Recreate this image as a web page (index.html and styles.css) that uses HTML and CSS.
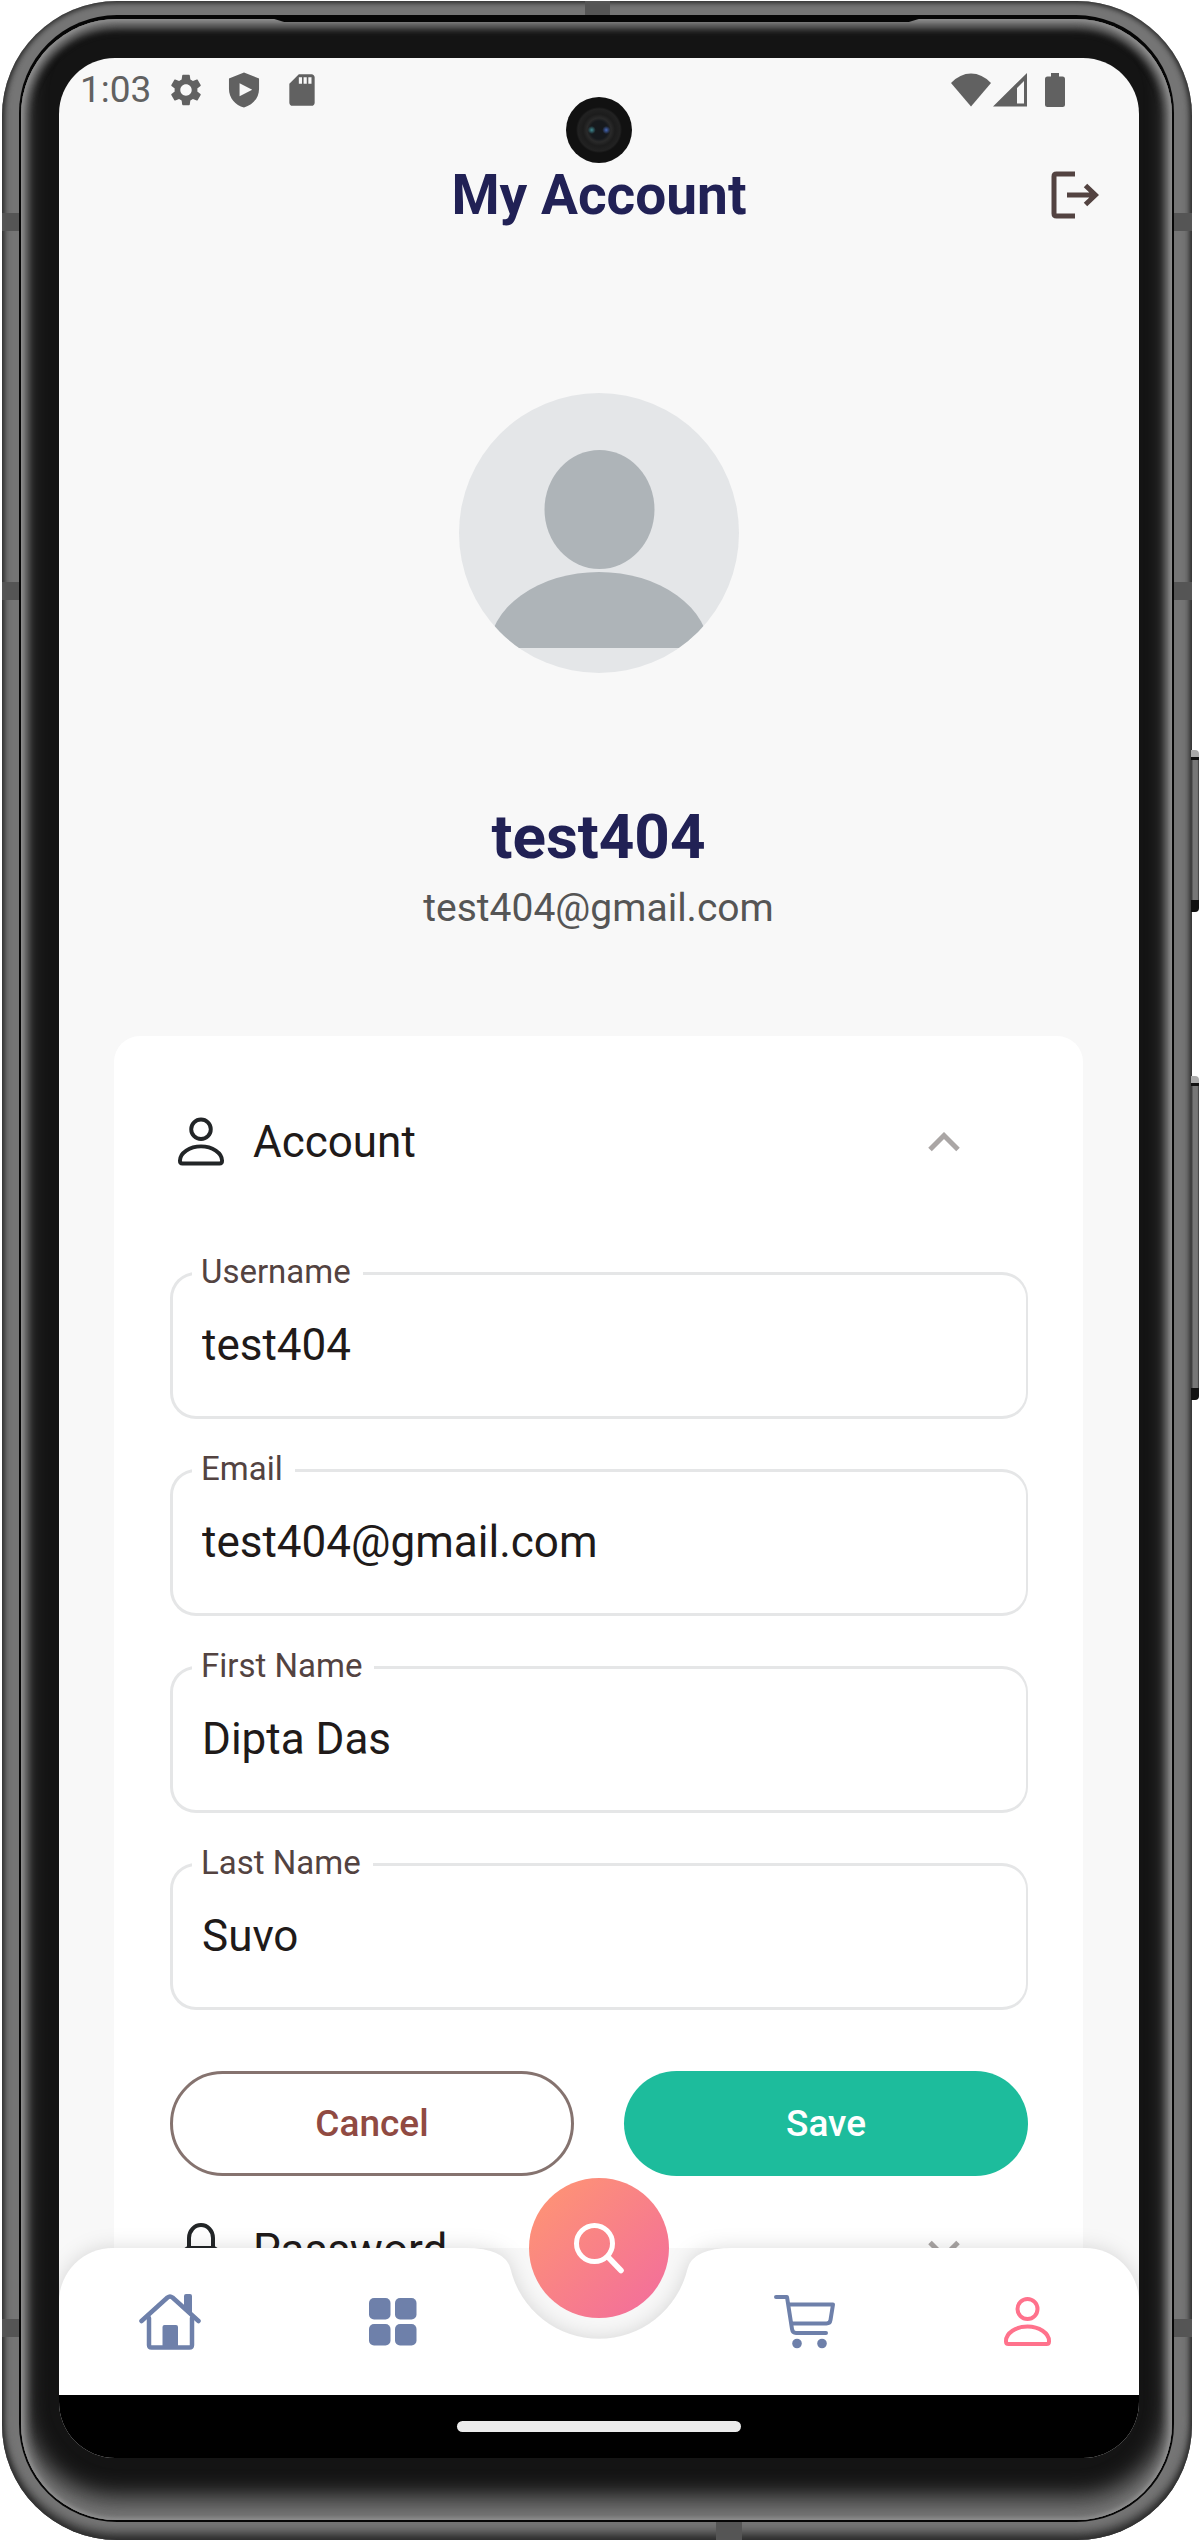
FILE: index.html
```html
<!DOCTYPE html>
<html lang="en">
<head>
<meta charset="utf-8">
<meta name="viewport" content="width=device-width, initial-scale=1">
<title>My Account</title>
<link rel="stylesheet" href="styles.css">
</head>
<body>
<svg class="sprite" aria-hidden="true">
  <symbol id="icon-person" viewBox="0 0 47 49">
    <g fill="none" stroke="currentColor" stroke-width="4" stroke-linejoin="round">
      <circle cx="23.500" cy="12" r="10"/>
      <path d="M2 44C2 36 12 29.500 23.500 29.500S45 36 45 44v.5q0 2.500-2.500 2.500h-38Q2 47 2 44.500z"/>
    </g>
  </symbol>
  <symbol id="icon-chevron" viewBox="0 0 32 20">
    <path d="M2 17.500 16 3.500l14 14" fill="none" stroke="currentColor" stroke-width="5"/>
  </symbol>
</svg>

<div class="phone">
  <span class="band band-side band-upper"></span>
  <span class="band band-side band-middle"></span>
  <span class="band band-side band-lower"></span>
  <span class="band band-top"></span>
  <span class="band band-bottom"></span>
  <span class="key key-power"></span>
  <span class="key key-volume"></span>

  <div class="rim">
    <div class="glass">
      <span class="speaker"></span>
      <div class="screen">
        <span class="camera"></span>

        <div class="status">
          <span class="time">1:03</span>
          <div class="status-icons">
            <svg width="38" height="38" viewBox="0 0 24 24"><path fill="currentColor" d="M19.140 12.940c.04-.3.06-.61.06-.94 0-.32-.02-.64-.07-.94l2.030-1.580c.18-.14.23-.41.12-.61l-1.920-3.320c-.12-.22-.37-.29-.59-.22l-2.390.96c-.5-.38-1.030-.7-1.620-.94l-.36-2.540c-.04-.24-.24-.41-.48-.41h-3.840c-.24 0-.43.17-.47.41l-.36 2.540c-.59.24-1.130.57-1.620.94l-2.390-.96c-.22-.08-.47 0-.59.22L2.740 8.870c-.12.21-.08.47.12.61l2.030 1.580c-.05.3-.09.63-.09.94s.02.64.07.94l-2.030 1.580c-.18.14-.23.41-.12.61l1.920 3.320c.12.22.37.29.59.22l2.390-.96c.5.38 1.030.7 1.620.94l.36 2.540c.05.24.24.41.48.41h3.840c.24 0 .44-.17.47-.41l.36-2.540c.59-.24 1.130-.56 1.620-.94l2.390.96c.22.08.47 0 .59-.22l1.920-3.320c.12-.22.07-.47-.12-.61l-2.010-1.580zM12 15.600c-1.980 0-3.600-1.620-3.600-3.600s1.620-3.600 3.600-3.600 3.600 1.620 3.600 3.600-1.620 3.600-3.600 3.600z"/></svg>
            <svg width="38" height="38" viewBox="0 0 24 24"><path fill="currentColor" fill-rule="evenodd" d="M12 1 2.500 4.700v6.600c0 5.700 4 10.200 9.500 11.700 5.500-1.500 9.500-6 9.500-11.700V4.700zM9.200 7.700l8 4.100-8 4.100z"/></svg>
            <svg width="38" height="38" viewBox="0 0 24 24"><path fill="currentColor" d="M18 2h-8L4 8v12c0 1.100.9 2 2 2h12c1.100 0 2-.9 2-2V4c0-1.100-.9-2-2-2zm-6 6h-2V4h2v4zm3 0h-2V4h2v4zm3 0h-2V4h2v4z"/></svg>
          </div>
          <div class="status-signal">
            <svg width="40" height="34" viewBox="0 0 40 34"><path fill="currentColor" d="M20 33.500 0 10Q9 .5 20 .5T40 10z"/></svg>
            <svg width="34" height="34" viewBox="0 0 34 34"><path fill="currentColor" fill-rule="evenodd" d="M34 0v33.500H0zM31 8l-7 7v15.500h7z"/></svg>
            <svg class="battery" width="20" height="34" viewBox="0 0 20 34"><path fill="currentColor" d="M6 0h8v3.500h3.500Q20 3.500 20 6v25.500q0 2.500-2.500 2.500h-15Q0 34 0 31.500V6q0-2.500 2.500-2.500H6z"/></svg>
          </div>
        </div>

        <header class="appbar">
          <h1 class="title">My Account</h1>
          <button class="logout" type="button" aria-label="Log out">
            <svg width="48" height="48" viewBox="0 0 48 48" fill="none" stroke="currentColor" stroke-width="5"><path d="M24 3H5.500Q3 3 3 5.500v37Q3 45 5.500 45H24"/><path d="M16 24h29M34.500 14.500 44.500 24l-10 9.500"/></svg>
          </button>
        </header>

        <main class="content">
          <section class="profile">
            <svg class="avatar" width="280" height="280" viewBox="0 0 280 280" role="img" aria-label="Profile picture">
              <clipPath id="avatar-clip"><circle cx="140" cy="140" r="140"/></clipPath>
              <clipPath id="body-clip"><rect width="280" height="255"/></clipPath>
              <g clip-path="url(#avatar-clip)">
                <rect width="280" height="280" fill="#e4e6e8"/>
                <ellipse cx="140.500" cy="116.500" rx="55" ry="59.500" fill="#aeb4b8"/>
                <path d="M29.500 259a110.500 80 0 0 1 221 0z" clip-path="url(#body-clip)" fill="#aeb4b8"/>
              </g>
            </svg>
            <h2 class="name">test404</h2>
            <p class="mail">test404@gmail.com</p>
          </section>

          <section class="card">
            <button class="row" type="button" aria-expanded="true">
              <svg class="row-icon" width="46" height="49"><use href="#icon-person"/></svg>
              <span class="row-label">Account</span>
              <svg class="chevron" width="32" height="20"><use href="#icon-chevron"/></svg>
            </button>

            <form class="form">
              <div class="field">
                <label for="username">Username</label>
                <input id="username" type="text" value="test404">
              </div>
              <div class="field">
                <label for="email">Email</label>
                <input id="email" type="email" value="test404@gmail.com">
              </div>
              <div class="field">
                <label for="first-name">First Name</label>
                <input id="first-name" type="text" value="Dipta Das">
              </div>
              <div class="field">
                <label for="last-name">Last Name</label>
                <input id="last-name" type="text" value="Suvo">
              </div>
              <div class="actions">
                <button class="btn btn-cancel" type="button">Cancel</button>
                <button class="btn btn-save" type="submit">Save</button>
              </div>
            </form>

            <button class="row" type="button" aria-expanded="false">
              <svg class="row-icon" width="46" height="54" viewBox="0 0 46 54" fill="none" stroke="currentColor" stroke-width="4"><path d="M11 25V15a12 13 0 0 1 24 0v10"/><rect x="7" y="25" width="32" height="27" rx="4"/></svg>
              <span class="row-label">Password</span>
              <svg class="chevron chevron-down" width="32" height="20"><use href="#icon-chevron"/></svg>
            </button>
          </section>
        </main>

        <nav class="tabbar" aria-label="Main">
          <div class="tabbar-shape">
            <span class="tabbar-end tabbar-start"></span>
            <svg width="268" height="147" viewBox="0 0 268 147"><path fill="#fff" d="M0 0Q40.500 0 45.500 21A91 91 0 0 0 222.500 21Q227.500 0 268 0V147H0z"/></svg>
            <span class="tabbar-end"></span>
          </div>
          <a class="tab" href="#home" aria-label="Home">
            <svg width="62" height="56" viewBox="0 0 62 56"><g fill="none" stroke="currentColor" stroke-width="4.500" stroke-linecap="round" stroke-linejoin="round"><path d="M2.500 27 28.500 3.500Q31 1.500 33.500 3.500L59.500 27"/><path d="M10 24v27q0 2.500 2.500 2.500h38q2.500 0 2.500-2.500V24"/></g><path fill="currentColor" d="M45 14V2q0-2 2-2h4q2 0 2 2v19zM23.500 33q0-2 2-2h11.500q2 0 2 2v20H23.500z"/></svg>
          </a>
          <a class="tab" href="#categories" aria-label="Categories">
            <svg width="48" height="48" viewBox="0 0 48 48" fill="currentColor"><rect width="21.500" height="21.500" rx="5"/><rect x="26" width="21.500" height="21.500" rx="5"/><rect y="26" width="21.500" height="21.500" rx="5"/><rect x="26" y="26" width="21.500" height="21.500" rx="5"/></svg>
          </a>
          <a class="tab tab-cart" href="#cart" aria-label="Cart">
            <svg width="62" height="54" viewBox="0 0 62 54"><g fill="none" stroke="currentColor" stroke-width="4" stroke-linecap="round" stroke-linejoin="round"><path d="M2 2h11l5 32q.6 4 4 4h30"/><path d="M15 9.500h44L56.500 25q-.5 3.500-4 3.500H18"/></g><circle cx="23" cy="48.500" r="4.800" fill="currentColor"/><circle cx="48" cy="48.500" r="4.800" fill="currentColor"/></svg>
          </a>
          <a class="tab tab-active" href="#account" aria-label="Account" aria-current="page">
            <svg width="47" height="49"><use href="#icon-person"/></svg>
          </a>
          <button class="search" type="button" aria-label="Search">
            <svg width="52" height="52" viewBox="0 0 52 52" fill="none" stroke="currentColor" stroke-linecap="round"><circle cx="21.500" cy="21.500" r="18" stroke-width="5"/><path stroke-width="5.500" d="m35.500 35.500 12.500 13"/></svg>
          </button>
        </nav>

        <div class="gesture"><span class="handle"></span></div>
      </div>
    </div>
  </div>
</div>
</body>
</html>
```
FILE: styles.css
```css
* {
  box-sizing: border-box;
}

body {
  margin: 0;
  background: #fff;
  font-family: Roboto, "Noto Sans", sans-serif;
}

h1,
h2,
p {
  margin: 0;
}

button,
input {
  font: inherit;
  color: inherit;
}

button {
  padding: 0;
  border: 0;
  background: none;
  cursor: pointer;
}

svg {
  display: block;
  flex: none;
}

.sprite {
  position: absolute;
  width: 0;
  height: 0;
}

/* Phone body */
.phone {
  position: relative;
  display: flex;
  height: calc(100vh - 2px);
  margin: 1px 8px 1px 2px;
  padding: 14px 18px 18px 17px;
  border-radius: 115px;
  background: #757575;
  box-shadow: inset 0 0 5px 2px #2c2c2c, inset 0 -8px 10px #3c3c3c;
}

.band {
  position: absolute;
  background: #555;
}

.band-side {
  left: 0;
  right: 0;
  height: 18px;
}

.band-upper {
  top: 212px;
}

.band-middle {
  top: 581px;
}

.band-lower {
  bottom: 203px;
}

.band-top {
  top: 0;
  left: 49%;
  width: 25px;
  height: 18px;
}

.band-bottom {
  bottom: 0;
  left: 60%;
  width: 26px;
  height: 18px;
}

.key {
  position: absolute;
  right: -7px;
  width: 8px;
  border-radius: 0 4px 4px 0;
  background:
    linear-gradient(#aaa 0 7px, #111 7px 10px, transparent 10px calc(100% - 12px), #111 calc(100% - 12px)),
    linear-gradient(90deg, #333, #777 30%, #777 80%, #333);
}

.key-power {
  top: 749px;
  height: 162px;
}

.key-volume {
  top: 1075px;
  height: 324px;
}

.rim {
  position: relative;
  flex: 1;
  display: flex;
  min-width: 0;
  padding: 4px 2px 2px;
  border-radius: 98px;
  background: #060606;
}

.glass {
  position: relative;
  flex: 1;
  display: flex;
  min-width: 0;
  padding: 39px 33px 62px 38px;
  border-radius: 96px;
  background: #141414;
  box-shadow:
    inset 0 0 4px 2px #929292,
    inset 0 0 9px 6px #757575,
    inset 0 6px 9px 3px #5c5c5c,
    inset 0 -22px 22px 2px #707070;
}

.speaker {
  position: absolute;
  top: 0;
  left: 22%;
  right: 22%;
  height: 3px;
  background: #060606;
  clip-path: polygon(0 0, 100% 0, calc(100% - 10px) 100%, 10px 100%);
}

/* Screen */
.screen {
  position: relative;
  flex: 1;
  display: flex;
  flex-direction: column;
  min-width: 0;
  overflow: hidden;
  border-radius: 56px;
  background: #f8f8f8;
}

.camera {
  position: absolute;
  top: 39px;
  left: 50%;
  width: 66px;
  height: 66px;
  margin-left: -33px;
  border-radius: 50%;
  background:
    radial-gradient(circle at 39% 50%, #3f8a92 0, transparent 4px),
    radial-gradient(circle at 61% 50%, #4668b8 0, transparent 4px),
    radial-gradient(circle, #16191d 0 9px, #2a2a2a 12px, #1c1c1c 16px, #222 21px, #111 23px);
}

.status {
  flex: none;
  display: flex;
  align-items: center;
  gap: 16px;
  height: 63px;
  padding: 0 74px 0 21px;
  color: #616161;
}

.time {
  font-size: 37px;
  line-height: 44px;
}

.status-icons {
  display: flex;
  gap: 20px;
}

.status-signal {
  display: flex;
  gap: 2px;
  margin-left: auto;
}

.battery {
  margin-left: 16px;
}

.appbar {
  flex: none;
  display: grid;
  grid-template-columns: 1fr auto 1fr;
  align-items: center;
  height: 147px;
  padding: 0 40px;
}

.title {
  grid-column: 2;
  color: #212155;
  font-size: 55px;
  font-weight: 700;
  line-height: 66px;
}

.logout {
  justify-self: end;
  color: #534341;
}

.content {
  flex: 1;
  min-height: 0;
  padding: 125px 56px 0 55px;
  overflow-y: auto;
  scrollbar-width: none;
}

.profile {
  display: flex;
  flex-direction: column;
  align-items: center;
}

.name {
  margin-top: 127px;
  color: #212155;
  font-size: 62px;
  font-weight: 700;
  line-height: 74px;
}

.mail {
  margin-top: 12px;
  color: #555;
  font-size: 39px;
  line-height: 44px;
}

/* Account card */
.card {
  margin-top: 106px;
  padding: 32px 0;
  border-radius: 26px;
  background: #fff;
  color: #201a19;
}

.row {
  display: flex;
  align-items: center;
  gap: 29px;
  width: 100%;
  height: 147px;
  padding: 0 123px 0 64px;
  font-size: 44px;
  line-height: 50px;
  text-align: left;
}

.row-icon {
  color: #222527;
}

.row-label {
  flex: 1;
}

.chevron {
  color: #aaa6a5;
}

.chevron-down {
  transform: rotate(180deg);
}

.form {
  display: flex;
  flex-direction: column;
  gap: 50px;
  padding: 57px 55px 0 56px;
}

.field {
  position: relative;
  display: flex;
}

.field label {
  position: absolute;
  top: -19px;
  left: 22px;
  padding: 0 12px 0 9px;
  background: #fff;
  color: #534341;
  font-size: 33px;
  line-height: 38px;
}

.field input {
  width: 100%;
  height: 147px;
  padding: 0 29px 2px;
  border: 3px solid #e5e6e7;
  border-right-width: 2px;
  border-radius: 26px;
  outline: 0;
  background: none;
  font-size: 44px;
}

.actions {
  display: grid;
  grid-template-columns: 1fr 1fr;
  gap: 50px;
  padding-top: 11px;
}

.btn {
  height: 105px;
  border-radius: 53px;
  font-size: 37px;
  font-weight: 500;
  line-height: 44px;
}

.btn-cancel {
  border: 3px solid #85736f;
  color: #904a42;
}

.btn-save {
  background: #1dbc9c;
  color: #fff;
}

/* Bottom navigation */
.tabbar {
  position: relative;
  flex: none;
  display: grid;
  grid-template-columns: 1fr 1fr 190px 1fr 1fr;
  height: 147px;
  background: #f8f8f8;
  color: #6e80aa;
}

.tabbar-shape {
  position: absolute;
  inset: 0;
  display: flex;
  filter: drop-shadow(0 0 10px rgba(0, 0, 0, 0.14));
}

.tabbar-end {
  flex: 1;
  border-radius: 0 54px 0 0;
  background: #fff;
}

.tabbar-start {
  border-radius: 54px 0 0;
}

.tab {
  position: relative;
  display: flex;
  align-items: center;
  justify-content: center;
  color: inherit;
}

.tab-cart {
  grid-column: 4;
}

.tab-active {
  color: #ff728c;
}

.search {
  position: absolute;
  top: -70px;
  left: 50%;
  display: flex;
  align-items: center;
  justify-content: center;
  width: 140px;
  height: 140px;
  margin-left: -70px;
  border-radius: 50%;
  background: linear-gradient(135deg, #ff9771, #f26b9e);
  color: #fff;
}

.gesture {
  position: relative;
  flex: none;
  display: flex;
  align-items: center;
  justify-content: center;
  height: 63px;
  background: #000;
}

.handle {
  width: 284px;
  height: 11px;
  border-radius: 6px;
  background: #ebebeb;
}
```
